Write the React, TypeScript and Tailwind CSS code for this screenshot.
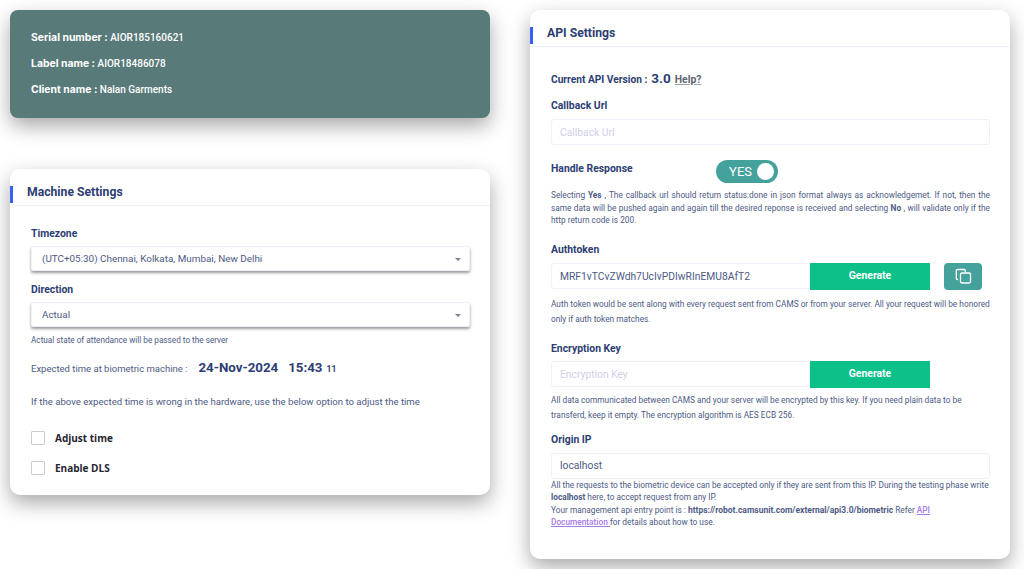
const labelClass = "block text-[10.4px] leading-[14px] font-bold text-[#2c3e73]";
const helpClass = "text-[8.3px] leading-[12.5px] text-[#4d5a85]";
const noteClass = "text-[8.3px] leading-[15px] text-[#4d5a85]";
const cardShadow = "shadow-[0_8px_20px_rgba(0,0,0,0.34)]";

function CardHeader({ title }: { title: string }) {
  return (
    <div className="h-[37px] pt-[14px] flex items-center border-b border-[#eef1f8]">
      <div className="w-[3px] h-[17px] bg-[#3662f4]" />
      <h2 className="ml-[14px] -mt-[3px] text-[12.2px] font-bold text-[#2c3e73]">{title}</h2>
    </div>
  );
}

function FakeSelect({ value }: { value: string }) {
  return (
    <div className="h-[25px] mt-[5px] pt-[1px] rounded-[2px] bg-white border border-[#eef1f8] shadow-[0_2px_3px_rgba(0,0,0,0.4)] flex items-center justify-between pl-[10px] pr-[8px]">
      <span className="text-[9.9px] text-[#4d5a85]">{value}</span>
      <span className="w-0 h-0 border-x-[3px] border-x-transparent border-t-[3px] border-t-[#7a829c]" />
    </div>
  );
}

function TextBox({ value, placeholder, className }: { value?: string; placeholder?: string; className?: string }) {
  return (
    <div className={`h-[26px] rounded-[3px] border border-[#edf1fa] bg-white flex items-center px-[8px] text-[10.3px] ${value ? "text-[#4d5a85]" : "text-[#cfd0ea]"} ${className ?? ""}`}>
      {value ?? placeholder}
    </div>
  );
}

function GenerateButton() {
  return (
    <button className="w-[120px] h-[27px] bg-[#0cc08a] text-white text-[10.4px] font-bold">Generate</button>
  );
}

function CheckRow({ label }: { label: string }) {
  return (
    <div className="flex items-center gap-[10px]">
      <span className="w-[14px] h-[14px] border border-[#c9ccd3] rounded-[1px] bg-white" />
      <span className="text-[10px] font-bold text-[#1f2430] font-['Open_Sans',sans-serif]">{label}</span>
    </div>
  );
}

function InfoLine({ label, value }: { label: string; value: string }) {
  return (
    <p>
      <b className="font-['Inter',sans-serif] text-[10.4px] font-bold">{label} : </b>
      {value}
    </p>
  );
}

export default function App() {
  return (
    <div className="w-[1024px] h-[569px] overflow-hidden bg-white flex gap-10 pt-[10px] pl-[10px] font-['Roboto',sans-serif]">
      {/* Left column */}
      <div className="w-[480px] flex flex-col gap-[51px]">
        <div className={`h-[108px] rounded-[8px] bg-[#587a79] ${cardShadow} pl-[21px] pt-[21px] text-white text-[10px] leading-[14px] font-medium flex flex-col gap-[12px]`}>
          <InfoLine label="Serial number" value="AIOR185160621" />
          <InfoLine label="Label name" value="AIOR18486078" />
          <InfoLine label="Client name" value="Nalan Garments" />
        </div>

        <div className={`h-[326px] rounded-[10px] bg-white ${cardShadow}`}>
          <CardHeader title="Machine Settings" />
          <div className="pl-[21px] pr-[20px] pt-[21px]">
            <label className={labelClass}>Timezone</label>
            <FakeSelect value="(UTC+05:30) Chennai, Kolkata, Mumbai, New Delhi" />
            <label className={`mt-[12px] ${labelClass}`}>Direction</label>
            <FakeSelect value="Actual" />
            <p className="mt-[6px] text-[8.2px] leading-[14px] text-[#4d5a85]">Actual state of attendance will be passed to the server</p>
            <div className="mt-[11px] flex items-baseline text-[9.5px] text-[#4d5a85]">
              <span>Expected time at biometric machine :</span>
              <span className="ml-[11px] text-[13.3px] font-bold text-[#2c3e73]">24-Nov-2024</span>
              <span className="ml-[10px] text-[13.3px] font-bold text-[#2c3e73]">15:43</span>
              <span className="ml-[4px] text-[8.5px] font-bold text-[#2c3e73]">11</span>
            </div>
            <p className="mt-[17px] text-[9.6px] leading-[14px] text-[#4d5a85]">If the above expected time is wrong in the hardware, use the below option to adjust the time</p>
            <div className="mt-[22px] flex flex-col gap-[15px]">
              <CheckRow label="Adjust time" />
              <CheckRow label="Enable DLS" />
            </div>
          </div>
        </div>
      </div>

      {/* Right card */}
      <div className={`w-[480px] h-[549px] rounded-[10px] bg-white ${cardShadow}`}>
        <CardHeader title="API Settings" />
        <div className="pl-[21px] pr-[20px] pt-[21px]">
          <div className="flex items-baseline">
            <span className="text-[10.2px] font-bold text-[#2c3e73]">Current API Version :</span>
            <span className="ml-[4px] text-[13.5px] font-bold text-[#2c3e73]">3.0</span>
            <span className="ml-[4px] text-[10.4px] font-bold text-[#5d6470] underline decoration-[#a0a0a0]">Help?</span>
          </div>
          <label className={`mt-[11px] ${labelClass}`}>Callback Url</label>
          <TextBox placeholder="Callback Url" className="mt-[6px]" />
          <div className="mt-[17px] flex items-start">
            <label className={`w-[165px] ${labelClass}`}>Handle Response</label>
            <div className="w-[62px] h-[23px] -mt-[2px] rounded-full bg-[#45a19b] flex items-center justify-end pr-[4px] gap-[5px]">
              <span className="text-white text-[13px]">YES</span>
              <span className="w-[17px] h-[17px] rounded-full bg-white" />
            </div>
          </div>
          <p className={`mt-[6px] ${helpClass} [text-align:justify]`}>
            Selecting <b className="font-bold">Yes</b> , The callback url should return status:done in json format always as acknowledgemet. If not, then the same data will be pushed again and again till the desired reponse is received and selecting <b className="font-bold">No</b> , will validate only if the http return code is 200.
          </p>
          <label className={`mt-[16px] ${labelClass}`}>Authtoken</label>
          <div className="mt-[6px] flex items-center">
            <TextBox value="MRF1vTCvZWdh7UcIvPDIwRInEMU8AfT2" className="w-[259px]" />
            <GenerateButton />
            <button className="ml-[14px] w-[38px] h-[27px] rounded-[4px] bg-[#45a19b] flex items-center justify-center">
              <svg width="17" height="17" viewBox="0 0 17 17" fill="none" stroke="white" strokeWidth="1.3">
                <path d="M3 11.5H2.5a1.2 1.2 0 0 1-1.2-1.2V2.7a1.2 1.2 0 0 1 1.2-1.2h6.6A1.2 1.2 0 0 1 10.3 2.7V4" />
                <rect x="5.5" y="5" width="10" height="10" rx="1.5" />
              </svg>
            </button>
          </div>
          <p className={`mt-[7px] ${noteClass}`}>
            Auth token would be sent along with every request sent from CAMS or from your server. All your request will be honored only if auth token matches.
          </p>
          <label className={`mt-[15px] ${labelClass}`}>Encryption Key</label>
          <div className="mt-[5px] flex items-center">
            <TextBox placeholder="Encryption Key" className="w-[259px]" />
            <GenerateButton />
          </div>
          <p className={`mt-[5px] ${noteClass}`}>
            All data communicated between CAMS and your server will be encrypted by this key. If you need plain data to be transferd, keep it empty. The encryption algorithm is AES ECB 256.
          </p>
          <label className={`mt-[10px] ${labelClass}`}>Origin IP</label>
          <TextBox value="localhost" className="mt-[6px]" />
          <p className={helpClass}>
            All the requests to the biometric device can be accepted only if they are sent from this IP. During the testing phase write <b className="font-bold">localhost</b> here, to accept request from any IP.
            <br />
            Your management api entry point is : <b className="font-bold text-[8.5px]">https://robot.camsunit.com/external/api3.0/biometric</b> Refer <a className="text-[#a67be8] font-medium underline">API<br />Documentation </a> for details about how to use.
          </p>
        </div>
      </div>
    </div>
  );
}
